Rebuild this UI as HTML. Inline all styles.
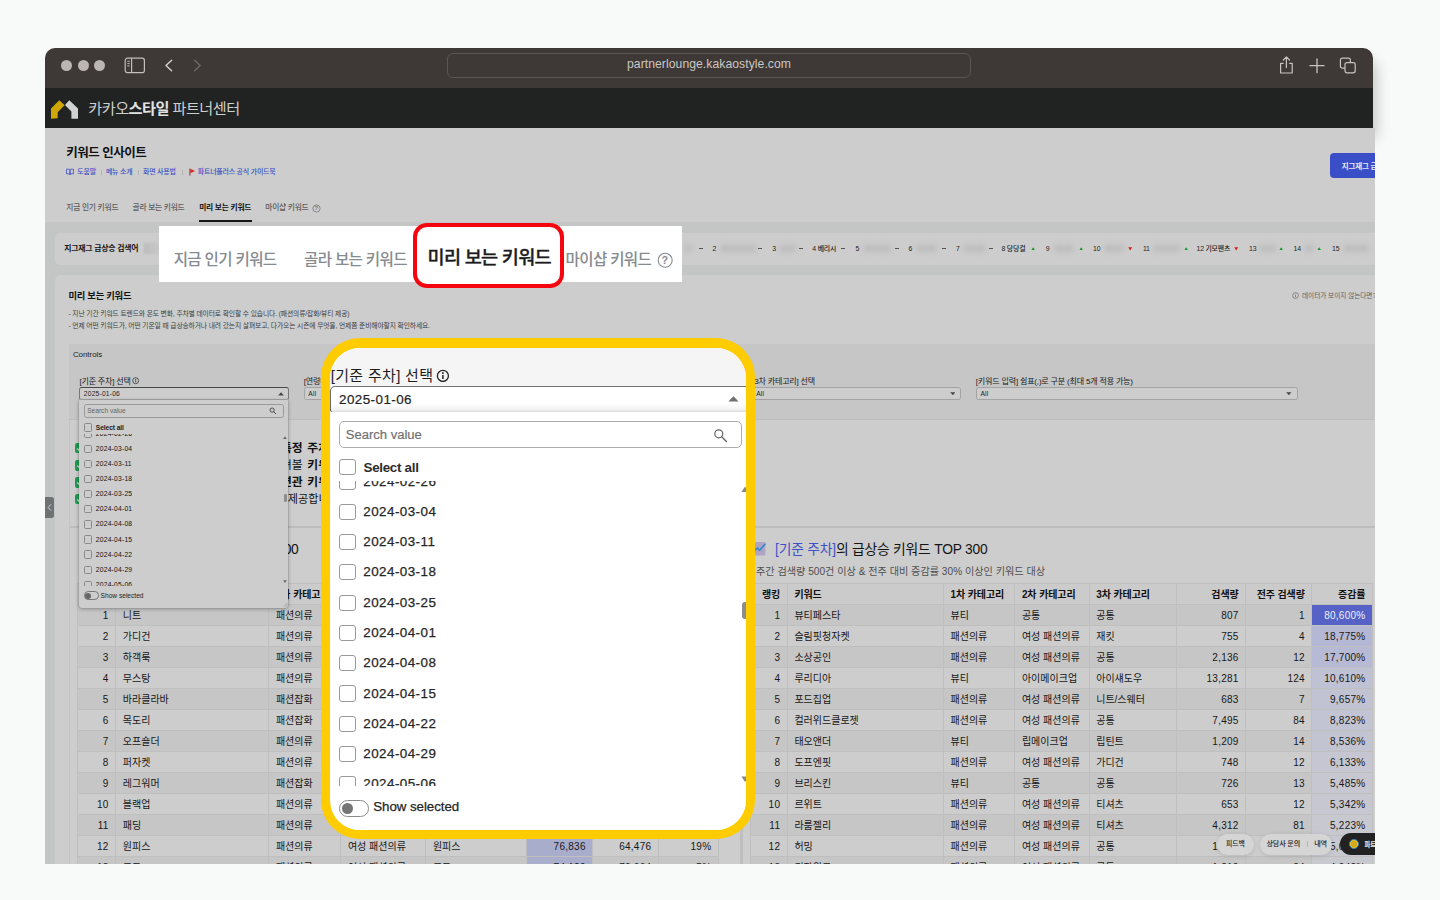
<!DOCTYPE html>
<html lang="ko"><head><meta charset="utf-8"><title>키워드 인사이트</title>
<style>
*{box-sizing:border-box;margin:0;padding:0}
html,body{width:1440px;height:900px;overflow:hidden;background:#f8f9f9;font-family:"Liberation Sans","Noto Sans CJK KR",sans-serif}
#root{position:absolute;left:0;top:0;width:1440px;height:900px;overflow:hidden}
#root div,#root span,#root svg{position:absolute}
#root span{white-space:nowrap;display:block}
#root span span{position:static;display:inline}
#win{left:44px;top:48px;width:1331px;height:816px;overflow:hidden}
#pg{left:-44px;top:-48px;width:1440px;height:900px}
.blur{filter:blur(2.5px);background:#bdbdbd;height:7px;border-radius:3px}
</style></head>
<body><div id="root">
<div style="left:52px;top:54px;width:1320px;height:78px;border-radius:10px 10px 0 0;box-shadow:5px 6px 14px rgba(0,0,0,.20)"></div>
<div id="win"><div id="pg">
<div style="left:44.5px;top:128px;width:1330.3px;height:740px;background:#c4c6c5;"></div>
<div style="left:44.5px;top:48px;width:1328.9px;height:40px;background:#3e3936;border-radius:10px 10px 0 0"></div>
<div style="left:44.5px;top:88px;width:1328.9px;height:40px;background:#212322;"></div>
<div style="left:61.3px;top:59.7px;width:11px;height:11px;background:#bcb5b2;border-radius:50%"></div>
<div style="left:77.7px;top:59.7px;width:11px;height:11px;background:#bcb5b2;border-radius:50%"></div>
<div style="left:94.0px;top:59.7px;width:11px;height:11px;background:#bcb5b2;border-radius:50%"></div>
<svg style="left:124px;top:57px" width="22" height="17" viewBox="0 0 22 17"><rect x="1.2" y="1.2" width="19.2" height="14.4" rx="2.2" fill="none" stroke="#c4bdb9" stroke-width="1.2"/><path d="M7.6 1.2V15.6" stroke="#c4bdb9" stroke-width="1.2"/><path d="M3.3 4.3h2.4M3.3 6.6h2.4M3.3 8.9h2.4" stroke="#c4bdb9" stroke-width="1"/></svg>
<svg style="left:163px;top:58px" width="12" height="15" viewBox="0 0 12 15"><path d="M8.6 2.2 3 7.5l5.6 5.3" fill="none" stroke="#d2ccc8" stroke-width="1.5" stroke-linecap="round" stroke-linejoin="round"/></svg>
<svg style="left:191px;top:58px" width="12" height="15" viewBox="0 0 12 15"><path d="M3.6 2.2 9.2 7.5l-5.6 5.3" fill="none" stroke="#6d6662" stroke-width="1.5" stroke-linecap="round" stroke-linejoin="round"/></svg>
<div style="left:447px;top:53px;width:524px;height:25px;background:#3e3936;border:1px solid #5b5551;border-radius:6px"></div>
<span style="left:709.0px;top:55.0px;font-size:12.2px;line-height:18px;color:#cbc6c3;font-weight:400;transform:translateX(-50%);letter-spacing:.05px">partnerlounge.kakaostyle.com</span>
<svg style="left:1278px;top:55px" width="17" height="20" viewBox="0 0 17 20"><path d="M5.6 8.3H2.6V18h11.6V8.3h-3" fill="none" stroke="#c9c3bf" stroke-width="1.2" stroke-linejoin="round"/><path d="M8.4 12.6V2.2M5.3 5 8.4 1.9 11.5 5" fill="none" stroke="#c9c3bf" stroke-width="1.2" stroke-linecap="round" stroke-linejoin="round"/></svg>
<svg style="left:1309px;top:58px" width="16" height="16" viewBox="0 0 16 16"><path d="M1 7.7h14M8 .9v13.8" stroke="#c9c3bf" stroke-width="1.3" stroke-linecap="round"/></svg>
<svg style="left:1339px;top:57px" width="18" height="17" viewBox="0 0 18 17"><rect x="1.4" y="1.2" width="10" height="10" rx="2" fill="none" stroke="#c9c3bf" stroke-width="1.2"/><rect x="6" y="5.6" width="10.2" height="10.2" rx="2" fill="#3e3936" stroke="#c9c3bf" stroke-width="1.2"/></svg>
<svg style="left:50px;top:99px" width="30" height="21" viewBox="0 0 30 21"><path d="M1 19.7V9.6L9.3 1.2 14.6 6.3 7.7 13.2V19.2Z" fill="#cfa602"/><path d="M19.3 1.2 28 9.6V19.7H21.4V12.6L15 6.1Z" fill="#d2d2d2"/></svg>
<span style="left:88.3px;top:97.9px;font-size:15.2px;line-height:22px;color:#cfcfcf;font-weight:400;letter-spacing:-.55px">카카오<span style="font-weight:700;color:#e2e2e2">스타일</span> 파트너센터</span>
<div style="left:44.5px;top:128px;width:1330.3px;height:94px;background:#cdcdcd;"></div>
<span style="left:66.3px;top:143.6px;font-size:12.5px;line-height:18px;color:#111;font-weight:700;letter-spacing:-.5px">키워드 인사이트</span>
<svg style="left:66px;top:168px" width="8" height="7.6" viewBox="0 0 80 76"><path d="M5 12H30Q40 12 40 22V66Q40 58 30 58H5ZM75 12H50Q40 12 40 22V66Q40 58 50 58H75Z" fill="none" stroke="#3b4fc4" stroke-width="8" stroke-linejoin="round"/></svg>
<span style="left:77.3px;top:166.8px;font-size:6.95px;line-height:10px;color:#3b4fc4;font-weight:500;letter-spacing:-.2px">도움말</span>
<div style="left:100.6px;top:169.5px;width:0.7px;height:5px;background:#b4b4b4;"></div>
<span style="left:105.9px;top:166.8px;font-size:6.95px;line-height:10px;color:#3b4fc4;font-weight:500;letter-spacing:-.2px">메뉴 소개</span>
<div style="left:138px;top:169.5px;width:0.7px;height:5px;background:#b4b4b4;"></div>
<span style="left:143.0px;top:166.8px;font-size:6.95px;line-height:10px;color:#3b4fc4;font-weight:500;letter-spacing:-.2px">화면 사용법</span>
<div style="left:181.8px;top:169.5px;width:0.7px;height:5px;background:#b4b4b4;"></div>
<svg style="left:189px;top:168px" width="7" height="8" viewBox="0 0 7 8"><path d="M.9.6v7" stroke="#7a2a22" stroke-width=".9"/><path d="M1.3.8 6 3 1.3 5.2Z" fill="#d62a22"/></svg>
<span style="left:197.8px;top:166.8px;font-size:6.95px;line-height:10px;color:#3b4fc4;font-weight:500;letter-spacing:-.2px">파트너플러스 공식 가이드북</span>
<span style="left:66.3px;top:202.3px;font-size:7.75px;line-height:11px;color:#5e5e5e;font-weight:500;letter-spacing:-.25px">지금 인기 키워드</span>
<span style="left:132.5px;top:202.3px;font-size:7.75px;line-height:11px;color:#5e5e5e;font-weight:500;letter-spacing:-.25px">골라 보는 키워드</span>
<span style="left:199.2px;top:202.3px;font-size:7.75px;line-height:11px;color:#111;font-weight:700;letter-spacing:-.25px">미리 보는 키워드</span>
<span style="left:265.3px;top:202.3px;font-size:7.75px;line-height:11px;color:#5e5e5e;font-weight:500;letter-spacing:-.25px">마이샵 키워드</span>
<svg style="left:311.8px;top:203.6px" width="9" height="9" viewBox="0 0 9 9"><circle cx="4.5" cy="4.5" r="3.6" fill="none" stroke="#6c6c6c" stroke-width=".7"/></svg>
<span style="left:316.3px;top:204.0px;font-size:5.2px;line-height:8px;color:#6c6c6c;font-weight:700;transform:translateX(-50%)">?</span>
<div style="left:199.2px;top:220.4px;width:53.2px;height:1.8px;background:#161616;"></div>
<div style="left:1330.4px;top:153px;width:60px;height:25px;background:#3a4ec7;border-radius:4px"></div>
<span style="left:1341.8px;top:161.0px;font-size:7.5px;line-height:11px;color:#e6e8f6;font-weight:700;letter-spacing:-.2px">지그재그 급상승</span>
<div style="left:55px;top:233px;width:1340px;height:31.5px;background:#cdcdcd;border-radius:5px"></div>
<span style="left:64.3px;top:242.9px;font-size:7.9px;line-height:12px;color:#141414;font-weight:700;letter-spacing:-.25px">지그재그 급상승 검색어</span>
<div style="left:144px;top:243px;width:16px;height:11px;background:linear-gradient(90deg,#bdbdbd,#c9c9c9);filter:blur(1.2px)"></div>
<div style="left:698.5px;top:248.3px;width:4px;height:0.9px;background:#555;"></div>
<div class="blur" style="left:684px;top:245px;width:8px"></div>
<span style="left:712.5px;top:243.8px;font-size:6.9px;line-height:10px;color:#1c1c1c;font-weight:500;letter-spacing:-.2px">2</span>
<div class="blur" style="left:720px;top:245.3px;width:36px"></div>
<div style="left:757.5px;top:248.3px;width:4px;height:0.9px;background:#555;"></div>
<span style="left:772.3px;top:243.8px;font-size:6.9px;line-height:10px;color:#1c1c1c;font-weight:500;letter-spacing:-.2px">3</span>
<div class="blur" style="left:779px;top:245.3px;width:17px"></div>
<div style="left:799px;top:248.3px;width:4px;height:0.9px;background:#555;"></div>
<span style="left:812.3px;top:243.8px;font-size:6.9px;line-height:10px;color:#1c1c1c;font-weight:500;letter-spacing:-.2px">4 베리시</span>
<div style="left:841px;top:248.3px;width:4px;height:0.9px;background:#555;"></div>
<span style="left:855.5px;top:243.8px;font-size:6.9px;line-height:10px;color:#1c1c1c;font-weight:500;letter-spacing:-.2px">5</span>
<div class="blur" style="left:863px;top:245.3px;width:28px"></div>
<div style="left:894.5px;top:248.3px;width:4px;height:0.9px;background:#555;"></div>
<span style="left:908.5px;top:243.8px;font-size:6.9px;line-height:10px;color:#1c1c1c;font-weight:500;letter-spacing:-.2px">6</span>
<div class="blur" style="left:916px;top:245.3px;width:21px"></div>
<div style="left:942px;top:248.3px;width:4px;height:0.9px;background:#555;"></div>
<span style="left:956.0px;top:243.8px;font-size:6.9px;line-height:10px;color:#1c1c1c;font-weight:500;letter-spacing:-.2px">7</span>
<div class="blur" style="left:963px;top:245.3px;width:23px"></div>
<div style="left:989px;top:248.3px;width:4px;height:0.9px;background:#555;"></div>
<span style="left:1001.5px;top:243.8px;font-size:6.9px;line-height:10px;color:#1c1c1c;font-weight:500;letter-spacing:-.2px">8 당당걸</span>
<svg style="left:1030.8px;top:246.6px" width="4.4" height="3.6" viewBox="0 0 44 36"><path d="M22 2 42 34H2Z" fill="#149a2a"/></svg>
<span style="left:1045.8px;top:243.8px;font-size:6.9px;line-height:10px;color:#1c1c1c;font-weight:500;letter-spacing:-.2px">9</span>
<div class="blur" style="left:1054px;top:245.3px;width:20px"></div>
<svg style="left:1078.8px;top:246.6px" width="4.4" height="3.6" viewBox="0 0 44 36"><path d="M22 2 42 34H2Z" fill="#149a2a"/></svg>
<span style="left:1093.0px;top:243.8px;font-size:6.9px;line-height:10px;color:#1c1c1c;font-weight:500;letter-spacing:-.2px">10</span>
<div class="blur" style="left:1104px;top:245.3px;width:20px"></div>
<svg style="left:1127.8px;top:247px" width="4.4" height="3.6" viewBox="0 0 44 36"><path d="M22 34 42 2H2Z" fill="#d81e1e"/></svg>
<span style="left:1143.0px;top:243.8px;font-size:6.9px;line-height:10px;color:#1c1c1c;font-weight:500;letter-spacing:-.2px">11</span>
<div class="blur" style="left:1153px;top:245.3px;width:27px"></div>
<svg style="left:1183.8px;top:246.6px" width="4.4" height="3.6" viewBox="0 0 44 36"><path d="M22 2 42 34H2Z" fill="#149a2a"/></svg>
<span style="left:1196.5px;top:243.8px;font-size:6.9px;line-height:10px;color:#1c1c1c;font-weight:500;letter-spacing:-.2px">12 기모팬츠</span>
<svg style="left:1234.2px;top:247px" width="4.4" height="3.6" viewBox="0 0 44 36"><path d="M22 34 42 2H2Z" fill="#d81e1e"/></svg>
<span style="left:1249.1px;top:243.8px;font-size:6.9px;line-height:10px;color:#1c1c1c;font-weight:500;letter-spacing:-.2px">13</span>
<div class="blur" style="left:1259px;top:245.3px;width:17px"></div>
<svg style="left:1278.8px;top:246.6px" width="4.4" height="3.6" viewBox="0 0 44 36"><path d="M22 2 42 34H2Z" fill="#149a2a"/></svg>
<span style="left:1293.5px;top:243.8px;font-size:6.9px;line-height:10px;color:#1c1c1c;font-weight:500;letter-spacing:-.2px">14</span>
<div class="blur" style="left:1304px;top:245.3px;width:10px"></div>
<svg style="left:1317.3px;top:246.6px" width="4.4" height="3.6" viewBox="0 0 44 36"><path d="M22 2 42 34H2Z" fill="#149a2a"/></svg>
<span style="left:1332.0px;top:243.8px;font-size:6.9px;line-height:10px;color:#1c1c1c;font-weight:500;letter-spacing:-.2px">15</span>
<div class="blur" style="left:1343px;top:245.3px;width:26px"></div>
<svg style="left:1374.8px;top:247px" width="4.4" height="3.6" viewBox="0 0 44 36"><path d="M22 34 42 2H2Z" fill="#d81e1e"/></svg>
<div style="left:55px;top:275px;width:1340px;height:620px;background:#cdcdcd;border-radius:6px"></div>
<span style="left:68.4px;top:289.1px;font-size:9.3px;line-height:14px;color:#111;font-weight:700;letter-spacing:-.25px">미리 보는 키워드</span>
<span style="left:68.4px;top:308.9px;font-size:6.76px;line-height:10px;color:#3c3c3c;font-weight:400;letter-spacing:-.1px">- 지난 기간 키워드 트렌드와 온도 변화, 주차별 데이터로 확인할 수 있습니다. (패션의류/잡화/뷰티 제공)</span>
<span style="left:68.4px;top:320.9px;font-size:6.76px;line-height:10px;color:#3c3c3c;font-weight:400;letter-spacing:-.1px">- 언제 어떤 키워드가, 어떤 기온일 때 급상승하거나 내려 갔는지 살펴보고, 다가오는 시즌에 무엇을, 언제쯤 준비해야할지 확인하세요.</span>
<svg style="left:1292.4px;top:292px" width="7" height="7" viewBox="0 0 7 7"><circle cx="3.5" cy="3.5" r="2.9" fill="none" stroke="#5e5e5e" stroke-width=".6"/><path d="M3.5 3.1v2M3.5 1.8v.6" stroke="#5e5e5e" stroke-width=".7"/></svg>
<span style="left:1302.0px;top:290.6px;font-size:6.6px;line-height:10px;color:#5e5e5e;font-weight:400;letter-spacing:0">데이터가 보이지 않는다면?</span>
<div style="left:69px;top:344.4px;width:1330px;height:75px;background:#c6c6c6;"></div>
<div style="left:69px;top:418.6px;width:1330px;height:1.6px;background:#bebebe;"></div>
<span style="left:72.9px;top:348.9px;font-size:7.9px;line-height:12px;color:#1c1c1c;font-weight:400;">Controls</span>
<span style="left:79.4px;top:375.5px;font-size:8.05px;line-height:12px;color:#1a1a1a;font-weight:400;letter-spacing:-.2px">[기준 주차] 선택</span>
<svg style="left:131.6px;top:377.4px" width="7.4" height="7.4" viewBox="0 0 74 74"><circle cx="37" cy="37" r="30" fill="none" stroke="#222" stroke-width="7"/><path d="M37 33v20" stroke="#222" stroke-width="8"/><circle cx="37" cy="22" r="5" fill="#222"/></svg>
<span style="left:303.7px;top:375.5px;font-size:8.05px;line-height:12px;color:#1a1a1a;font-weight:400;letter-spacing:-.2px">[연령대] 선택</span>
<span style="left:752.2px;top:375.5px;font-size:8.05px;line-height:12px;color:#1a1a1a;font-weight:400;letter-spacing:-.2px">[3차 카테고리] 선택</span>
<span style="left:975.8px;top:375.5px;font-size:8.05px;line-height:12px;color:#1a1a1a;font-weight:400;letter-spacing:-.2px">[키워드 입력] 쉼표(,)로 구분 (최대 5개 적용 가능)</span>
<div style="left:79.2px;top:386.8px;width:209.4px;height:13.4px;background:#cdcdcd;border:1px solid #4a4a4a;border-radius:2.5px;border-bottom-color:#b0b0b0;border-left-color:#777;border-right-color:#777"></div>
<span style="left:83.8px;top:388.6px;font-size:6.7px;line-height:10px;color:#1c1c1c;font-weight:400;letter-spacing:.2px">2025-01-06</span>
<svg style="left:278.0px;top:392px" width="6" height="3.6" viewBox="0 0 60 36"><path d="M30 2 58 34H2Z" fill="#444"/></svg>
<div style="left:303.7px;top:386.8px;width:120px;height:13.4px;background:#cdcdcd;border:1px solid #a3a3a3;border-radius:2.5px"></div>
<span style="left:308.3px;top:388.6px;font-size:6.7px;line-height:10px;color:#1c1c1c;font-weight:400;letter-spacing:.2px">All</span>
<svg style="left:412.09999999999997px;top:392px" width="5.6" height="3.4" viewBox="0 0 60 36"><path d="M30 34 58 2H2Z" fill="#444"/></svg>
<div style="left:751.6px;top:386.8px;width:209.8px;height:13.4px;background:#cdcdcd;border:1px solid #a3a3a3;border-radius:2.5px"></div>
<span style="left:756.2px;top:388.6px;font-size:6.7px;line-height:10px;color:#1c1c1c;font-weight:400;letter-spacing:.2px">All</span>
<svg style="left:949.8000000000001px;top:392px" width="5.6" height="3.4" viewBox="0 0 60 36"><path d="M30 34 58 2H2Z" fill="#444"/></svg>
<div style="left:975.8px;top:386.8px;width:321.8px;height:13.4px;background:#cdcdcd;border:1px solid #a3a3a3;border-radius:2.5px"></div>
<span style="left:980.4px;top:388.6px;font-size:6.7px;line-height:10px;color:#1c1c1c;font-weight:400;letter-spacing:.2px">All</span>
<svg style="left:1286.0px;top:392px" width="5.6" height="3.4" viewBox="0 0 60 36"><path d="M30 34 58 2H2Z" fill="#444"/></svg>
<div style="left:70px;top:420px;width:671px;height:106px;background:#cdcdcd;"></div>
<div style="left:75.4px;top:442.6px;width:10.6px;height:10.6px;background:#1f9d4f;border-radius:2px"></div>
<svg style="left:75.4px;top:442.6px" width="10.6" height="10.6" viewBox="0 0 106 106"><path d="M22 56 44 78 84 28" fill="none" stroke="#d8d8d8" stroke-width="14"/></svg>
<span style="left:280.9px;top:440.5px;font-size:11.8px;line-height:15px;color:#111;font-weight:400;letter-spacing:0;word-spacing:1.4px"><b>특정 주차</b>의 급상승 키워드</span>
<div style="left:75.4px;top:460.20000000000005px;width:10.6px;height:10.6px;background:#1f9d4f;border-radius:2px"></div>
<svg style="left:75.4px;top:460.20000000000005px" width="10.6" height="10.6" viewBox="0 0 106 106"><path d="M22 56 44 78 84 28" fill="none" stroke="#d8d8d8" stroke-width="14"/></svg>
<span style="left:280.9px;top:458.1px;font-size:11.8px;line-height:15px;color:#111;font-weight:400;letter-spacing:0;word-spacing:1.4px">펴볼 <b>키워드</b>를 입력</span>
<div style="left:75.4px;top:477.3px;width:10.6px;height:10.6px;background:#1f9d4f;border-radius:2px"></div>
<svg style="left:75.4px;top:477.3px" width="10.6" height="10.6" viewBox="0 0 106 106"><path d="M22 56 44 78 84 28" fill="none" stroke="#d8d8d8" stroke-width="14"/></svg>
<span style="left:280.9px;top:475.2px;font-size:11.8px;line-height:15px;color:#111;font-weight:400;letter-spacing:0;word-spacing:1.4px"><b>연관 키워드</b>의 추이</span>
<div style="left:75.4px;top:493.90000000000003px;width:10.6px;height:10.6px;background:#1f9d4f;border-radius:2px"></div>
<svg style="left:75.4px;top:493.90000000000003px" width="10.6" height="10.6" viewBox="0 0 106 106"><path d="M22 56 44 78 84 28" fill="none" stroke="#d8d8d8" stroke-width="14"/></svg>
<span style="left:287.8px;top:491.8px;font-size:11.1px;line-height:15px;color:#111;font-weight:400;letter-spacing:0;word-spacing:1.4px">제공합니다.</span>
<div style="left:70px;top:526.2px;width:1330px;height:2px;background:#bdbdbd;"></div>
<div style="left:740.2px;top:528px;width:2.6px;height:340px;background:#bfbfbf;"></div>
<div style="left:69.4px;top:420px;width:0.9px;height:450px;background:#c3c3c3;"></div>
<div style="left:77.3px;top:583.0px;width:641.0px;height:21.03px;background:#cbcbcb;"></div>
<div style="left:77.3px;top:583.0px;width:641.0px;height:0.9px;background:#bfbfbf;"></div>
<span style="right:1331.4px;top:587.9px;font-size:10.0px;line-height:14px;color:#111;font-weight:700;letter-spacing:-.1px">순위</span>
<span style="left:122.8px;top:587.9px;font-size:10.0px;line-height:14px;color:#111;font-weight:700;letter-spacing:-.1px">키워드</span>
<span style="left:275.9px;top:587.9px;font-size:10.0px;line-height:14px;color:#111;font-weight:700;letter-spacing:-.1px">1차 카테고리</span>
<span style="left:347.9px;top:587.9px;font-size:10.0px;line-height:14px;color:#111;font-weight:700;letter-spacing:-.1px">2차 카테고리</span>
<span style="left:432.9px;top:587.9px;font-size:10.0px;line-height:14px;color:#111;font-weight:700;letter-spacing:-.1px">3차 카테고리</span>
<span style="right:854.3px;top:587.9px;font-size:10.0px;line-height:14px;color:#111;font-weight:700;letter-spacing:-.1px">검색량</span>
<span style="right:788.7px;top:587.9px;font-size:10.0px;line-height:14px;color:#111;font-weight:700;letter-spacing:-.1px">전주 검색량</span>
<span style="right:728.7px;top:587.9px;font-size:10.0px;line-height:14px;color:#111;font-weight:700;letter-spacing:-.1px">증감률</span>
<div style="left:77.3px;top:604.0px;width:641.0px;height:21.03px;background:#c6c6c6;"></div>
<div style="left:526px;top:604.0px;width:66.70000000000005px;height:21.03px;background:#8f95c8;"></div>
<div style="left:77.3px;top:604.0px;width:641.0px;height:0.9px;background:#bfbfbf;"></div>
<span style="right:1331.4px;top:608.6px;font-size:10.0px;line-height:14px;color:#171717;font-weight:400;letter-spacing:.25px">1</span>
<span style="left:122.8px;top:608.6px;font-size:10.0px;line-height:14px;color:#171717;font-weight:400;letter-spacing:0">니트</span>
<span style="left:275.9px;top:608.6px;font-size:10.0px;line-height:14px;color:#171717;font-weight:400;letter-spacing:0">패션의류</span>
<span style="left:347.9px;top:608.6px;font-size:10.0px;line-height:14px;color:#171717;font-weight:400;letter-spacing:0">여성 패션의류</span>
<span style="left:432.9px;top:608.6px;font-size:10.0px;line-height:14px;color:#171717;font-weight:400;letter-spacing:0">니트/스웨터</span>
<span style="right:854.3px;top:608.6px;font-size:10.0px;line-height:14px;color:#171717;font-weight:400;letter-spacing:.25px">182,340</span>
<span style="right:788.7px;top:608.6px;font-size:10.0px;line-height:14px;color:#171717;font-weight:400;letter-spacing:.25px">171,220</span>
<span style="right:728.7px;top:608.6px;font-size:10.0px;line-height:14px;color:#171717;font-weight:400;letter-spacing:.25px">6%</span>
<div style="left:77.3px;top:625.03px;width:641.0px;height:21.03px;background:#cdcdcd;"></div>
<div style="left:526px;top:625.03px;width:66.70000000000005px;height:21.03px;background:#969bca;"></div>
<div style="left:77.3px;top:625.03px;width:641.0px;height:0.9px;background:#bfbfbf;"></div>
<span style="right:1331.4px;top:629.6px;font-size:10.0px;line-height:14px;color:#171717;font-weight:400;letter-spacing:.25px">2</span>
<span style="left:122.8px;top:629.6px;font-size:10.0px;line-height:14px;color:#171717;font-weight:400;letter-spacing:0">가디건</span>
<span style="left:275.9px;top:629.6px;font-size:10.0px;line-height:14px;color:#171717;font-weight:400;letter-spacing:0">패션의류</span>
<span style="left:347.9px;top:629.6px;font-size:10.0px;line-height:14px;color:#171717;font-weight:400;letter-spacing:0">여성 패션의류</span>
<span style="left:432.9px;top:629.6px;font-size:10.0px;line-height:14px;color:#171717;font-weight:400;letter-spacing:0">가디건</span>
<span style="right:854.3px;top:629.6px;font-size:10.0px;line-height:14px;color:#171717;font-weight:400;letter-spacing:.25px">154,872</span>
<span style="right:788.7px;top:629.6px;font-size:10.0px;line-height:14px;color:#171717;font-weight:400;letter-spacing:.25px">149,310</span>
<span style="right:728.7px;top:629.6px;font-size:10.0px;line-height:14px;color:#171717;font-weight:400;letter-spacing:.25px">4%</span>
<div style="left:77.3px;top:646.06px;width:641.0px;height:21.03px;background:#c6c6c6;"></div>
<div style="left:526px;top:646.06px;width:66.70000000000005px;height:21.03px;background:#9ca1cb;"></div>
<div style="left:77.3px;top:646.06px;width:641.0px;height:0.9px;background:#bfbfbf;"></div>
<span style="right:1331.4px;top:650.7px;font-size:10.0px;line-height:14px;color:#171717;font-weight:400;letter-spacing:.25px">3</span>
<span style="left:122.8px;top:650.7px;font-size:10.0px;line-height:14px;color:#171717;font-weight:400;letter-spacing:0">하객룩</span>
<span style="left:275.9px;top:650.7px;font-size:10.0px;line-height:14px;color:#171717;font-weight:400;letter-spacing:0">패션의류</span>
<span style="left:347.9px;top:650.7px;font-size:10.0px;line-height:14px;color:#171717;font-weight:400;letter-spacing:0">여성 패션의류</span>
<span style="left:432.9px;top:650.7px;font-size:10.0px;line-height:14px;color:#171717;font-weight:400;letter-spacing:0">공통</span>
<span style="right:854.3px;top:650.7px;font-size:10.0px;line-height:14px;color:#171717;font-weight:400;letter-spacing:.25px">132,561</span>
<span style="right:788.7px;top:650.7px;font-size:10.0px;line-height:14px;color:#171717;font-weight:400;letter-spacing:.25px">120,447</span>
<span style="right:728.7px;top:650.7px;font-size:10.0px;line-height:14px;color:#171717;font-weight:400;letter-spacing:.25px">10%</span>
<div style="left:77.3px;top:667.09px;width:641.0px;height:21.03px;background:#cdcdcd;"></div>
<div style="left:526px;top:667.09px;width:66.70000000000005px;height:21.03px;background:#a0a4cc;"></div>
<div style="left:77.3px;top:667.09px;width:641.0px;height:0.9px;background:#bfbfbf;"></div>
<span style="right:1331.4px;top:671.7px;font-size:10.0px;line-height:14px;color:#171717;font-weight:400;letter-spacing:.25px">4</span>
<span style="left:122.8px;top:671.7px;font-size:10.0px;line-height:14px;color:#171717;font-weight:400;letter-spacing:0">무스탕</span>
<span style="left:275.9px;top:671.7px;font-size:10.0px;line-height:14px;color:#171717;font-weight:400;letter-spacing:0">패션의류</span>
<span style="left:347.9px;top:671.7px;font-size:10.0px;line-height:14px;color:#171717;font-weight:400;letter-spacing:0">여성 패션의류</span>
<span style="left:432.9px;top:671.7px;font-size:10.0px;line-height:14px;color:#171717;font-weight:400;letter-spacing:0">무스탕</span>
<span style="right:854.3px;top:671.7px;font-size:10.0px;line-height:14px;color:#171717;font-weight:400;letter-spacing:.25px">121,094</span>
<span style="right:788.7px;top:671.7px;font-size:10.0px;line-height:14px;color:#171717;font-weight:400;letter-spacing:.25px">118,236</span>
<span style="right:728.7px;top:671.7px;font-size:10.0px;line-height:14px;color:#171717;font-weight:400;letter-spacing:.25px">2%</span>
<div style="left:77.3px;top:688.12px;width:641.0px;height:21.03px;background:#c6c6c6;"></div>
<div style="left:526px;top:688.12px;width:66.70000000000005px;height:21.03px;background:#a3a7cc;"></div>
<div style="left:77.3px;top:688.12px;width:641.0px;height:0.9px;background:#bfbfbf;"></div>
<span style="right:1331.4px;top:692.7px;font-size:10.0px;line-height:14px;color:#171717;font-weight:400;letter-spacing:.25px">5</span>
<span style="left:122.8px;top:692.7px;font-size:10.0px;line-height:14px;color:#171717;font-weight:400;letter-spacing:0">바라클라바</span>
<span style="left:275.9px;top:692.7px;font-size:10.0px;line-height:14px;color:#171717;font-weight:400;letter-spacing:0">패션잡화</span>
<span style="left:347.9px;top:692.7px;font-size:10.0px;line-height:14px;color:#171717;font-weight:400;letter-spacing:0">모자</span>
<span style="left:432.9px;top:692.7px;font-size:10.0px;line-height:14px;color:#171717;font-weight:400;letter-spacing:0">바라클라바</span>
<span style="right:854.3px;top:692.7px;font-size:10.0px;line-height:14px;color:#171717;font-weight:400;letter-spacing:.25px">110,482</span>
<span style="right:788.7px;top:692.7px;font-size:10.0px;line-height:14px;color:#171717;font-weight:400;letter-spacing:.25px">98,377</span>
<span style="right:728.7px;top:692.7px;font-size:10.0px;line-height:14px;color:#171717;font-weight:400;letter-spacing:.25px">12%</span>
<div style="left:77.3px;top:709.15px;width:641.0px;height:21.03px;background:#cdcdcd;"></div>
<div style="left:526px;top:709.15px;width:66.70000000000005px;height:21.03px;background:#a5a9cc;"></div>
<div style="left:77.3px;top:709.15px;width:641.0px;height:0.9px;background:#bfbfbf;"></div>
<span style="right:1331.4px;top:713.8px;font-size:10.0px;line-height:14px;color:#171717;font-weight:400;letter-spacing:.25px">6</span>
<span style="left:122.8px;top:713.8px;font-size:10.0px;line-height:14px;color:#171717;font-weight:400;letter-spacing:0">목도리</span>
<span style="left:275.9px;top:713.8px;font-size:10.0px;line-height:14px;color:#171717;font-weight:400;letter-spacing:0">패션잡화</span>
<span style="left:347.9px;top:713.8px;font-size:10.0px;line-height:14px;color:#171717;font-weight:400;letter-spacing:0">머플러/스카프</span>
<span style="left:432.9px;top:713.8px;font-size:10.0px;line-height:14px;color:#171717;font-weight:400;letter-spacing:0">머플러</span>
<span style="right:854.3px;top:713.8px;font-size:10.0px;line-height:14px;color:#171717;font-weight:400;letter-spacing:.25px">104,925</span>
<span style="right:788.7px;top:713.8px;font-size:10.0px;line-height:14px;color:#171717;font-weight:400;letter-spacing:.25px">97,118</span>
<span style="right:728.7px;top:713.8px;font-size:10.0px;line-height:14px;color:#171717;font-weight:400;letter-spacing:.25px">8%</span>
<div style="left:77.3px;top:730.1800000000001px;width:641.0px;height:21.03px;background:#c6c6c6;"></div>
<div style="left:526px;top:730.1800000000001px;width:66.70000000000005px;height:21.03px;background:#a6aacc;"></div>
<div style="left:77.3px;top:730.1800000000001px;width:641.0px;height:0.9px;background:#bfbfbf;"></div>
<span style="right:1331.4px;top:734.8px;font-size:10.0px;line-height:14px;color:#171717;font-weight:400;letter-spacing:.25px">7</span>
<span style="left:122.8px;top:734.8px;font-size:10.0px;line-height:14px;color:#171717;font-weight:400;letter-spacing:0">오프숄더</span>
<span style="left:275.9px;top:734.8px;font-size:10.0px;line-height:14px;color:#171717;font-weight:400;letter-spacing:0">패션의류</span>
<span style="left:347.9px;top:734.8px;font-size:10.0px;line-height:14px;color:#171717;font-weight:400;letter-spacing:0">여성 패션의류</span>
<span style="left:432.9px;top:734.8px;font-size:10.0px;line-height:14px;color:#171717;font-weight:400;letter-spacing:0">티셔츠</span>
<span style="right:854.3px;top:734.8px;font-size:10.0px;line-height:14px;color:#171717;font-weight:400;letter-spacing:.25px">98,113</span>
<span style="right:788.7px;top:734.8px;font-size:10.0px;line-height:14px;color:#171717;font-weight:400;letter-spacing:.25px">91,540</span>
<span style="right:728.7px;top:734.8px;font-size:10.0px;line-height:14px;color:#171717;font-weight:400;letter-spacing:.25px">7%</span>
<div style="left:77.3px;top:751.21px;width:641.0px;height:21.03px;background:#cdcdcd;"></div>
<div style="left:526px;top:751.21px;width:66.70000000000005px;height:21.03px;background:#a7abcc;"></div>
<div style="left:77.3px;top:751.21px;width:641.0px;height:0.9px;background:#bfbfbf;"></div>
<span style="right:1331.4px;top:755.8px;font-size:10.0px;line-height:14px;color:#171717;font-weight:400;letter-spacing:.25px">8</span>
<span style="left:122.8px;top:755.8px;font-size:10.0px;line-height:14px;color:#171717;font-weight:400;letter-spacing:0">퍼자켓</span>
<span style="left:275.9px;top:755.8px;font-size:10.0px;line-height:14px;color:#171717;font-weight:400;letter-spacing:0">패션의류</span>
<span style="left:347.9px;top:755.8px;font-size:10.0px;line-height:14px;color:#171717;font-weight:400;letter-spacing:0">여성 패션의류</span>
<span style="left:432.9px;top:755.8px;font-size:10.0px;line-height:14px;color:#171717;font-weight:400;letter-spacing:0">재킷</span>
<span style="right:854.3px;top:755.8px;font-size:10.0px;line-height:14px;color:#171717;font-weight:400;letter-spacing:.25px">93,207</span>
<span style="right:788.7px;top:755.8px;font-size:10.0px;line-height:14px;color:#171717;font-weight:400;letter-spacing:.25px">88,652</span>
<span style="right:728.7px;top:755.8px;font-size:10.0px;line-height:14px;color:#171717;font-weight:400;letter-spacing:.25px">5%</span>
<div style="left:77.3px;top:772.24px;width:641.0px;height:21.03px;background:#c6c6c6;"></div>
<div style="left:526px;top:772.24px;width:66.70000000000005px;height:21.03px;background:#a8accc;"></div>
<div style="left:77.3px;top:772.24px;width:641.0px;height:0.9px;background:#bfbfbf;"></div>
<span style="right:1331.4px;top:776.9px;font-size:10.0px;line-height:14px;color:#171717;font-weight:400;letter-spacing:.25px">9</span>
<span style="left:122.8px;top:776.9px;font-size:10.0px;line-height:14px;color:#171717;font-weight:400;letter-spacing:0">레그워머</span>
<span style="left:275.9px;top:776.9px;font-size:10.0px;line-height:14px;color:#171717;font-weight:400;letter-spacing:0">패션잡화</span>
<span style="left:347.9px;top:776.9px;font-size:10.0px;line-height:14px;color:#171717;font-weight:400;letter-spacing:0">양말/스타킹</span>
<span style="left:432.9px;top:776.9px;font-size:10.0px;line-height:14px;color:#171717;font-weight:400;letter-spacing:0">레그워머</span>
<span style="right:854.3px;top:776.9px;font-size:10.0px;line-height:14px;color:#171717;font-weight:400;letter-spacing:.25px">88,730</span>
<span style="right:788.7px;top:776.9px;font-size:10.0px;line-height:14px;color:#171717;font-weight:400;letter-spacing:.25px">80,114</span>
<span style="right:728.7px;top:776.9px;font-size:10.0px;line-height:14px;color:#171717;font-weight:400;letter-spacing:.25px">11%</span>
<div style="left:77.3px;top:793.27px;width:641.0px;height:21.03px;background:#cdcdcd;"></div>
<div style="left:526px;top:793.27px;width:66.70000000000005px;height:21.03px;background:#a8accc;"></div>
<div style="left:77.3px;top:793.27px;width:641.0px;height:0.9px;background:#bfbfbf;"></div>
<span style="right:1331.4px;top:797.9px;font-size:10.0px;line-height:14px;color:#171717;font-weight:400;letter-spacing:.25px">10</span>
<span style="left:122.8px;top:797.9px;font-size:10.0px;line-height:14px;color:#171717;font-weight:400;letter-spacing:0">블랙업</span>
<span style="left:275.9px;top:797.9px;font-size:10.0px;line-height:14px;color:#171717;font-weight:400;letter-spacing:0">패션의류</span>
<span style="left:347.9px;top:797.9px;font-size:10.0px;line-height:14px;color:#171717;font-weight:400;letter-spacing:0">여성 패션의류</span>
<span style="left:432.9px;top:797.9px;font-size:10.0px;line-height:14px;color:#171717;font-weight:400;letter-spacing:0">공통</span>
<span style="right:854.3px;top:797.9px;font-size:10.0px;line-height:14px;color:#171717;font-weight:400;letter-spacing:.25px">84,006</span>
<span style="right:788.7px;top:797.9px;font-size:10.0px;line-height:14px;color:#171717;font-weight:400;letter-spacing:.25px">79,925</span>
<span style="right:728.7px;top:797.9px;font-size:10.0px;line-height:14px;color:#171717;font-weight:400;letter-spacing:.25px">5%</span>
<div style="left:77.3px;top:814.3px;width:641.0px;height:21.03px;background:#c6c6c6;"></div>
<div style="left:526px;top:814.3px;width:66.70000000000005px;height:21.03px;background:#a9adcc;"></div>
<div style="left:77.3px;top:814.3px;width:641.0px;height:0.9px;background:#bfbfbf;"></div>
<span style="right:1331.4px;top:818.9px;font-size:10.0px;line-height:14px;color:#171717;font-weight:400;letter-spacing:.25px">11</span>
<span style="left:122.8px;top:818.9px;font-size:10.0px;line-height:14px;color:#171717;font-weight:400;letter-spacing:0">패딩</span>
<span style="left:275.9px;top:818.9px;font-size:10.0px;line-height:14px;color:#171717;font-weight:400;letter-spacing:0">패션의류</span>
<span style="left:347.9px;top:818.9px;font-size:10.0px;line-height:14px;color:#171717;font-weight:400;letter-spacing:0">여성 패션의류</span>
<span style="left:432.9px;top:818.9px;font-size:10.0px;line-height:14px;color:#171717;font-weight:400;letter-spacing:0">패딩</span>
<span style="right:854.3px;top:818.9px;font-size:10.0px;line-height:14px;color:#171717;font-weight:400;letter-spacing:.25px">80,492</span>
<span style="right:788.7px;top:818.9px;font-size:10.0px;line-height:14px;color:#171717;font-weight:400;letter-spacing:.25px">86,310</span>
<span style="right:728.7px;top:818.9px;font-size:10.0px;line-height:14px;color:#171717;font-weight:400;letter-spacing:.25px">-7%</span>
<div style="left:77.3px;top:835.33px;width:641.0px;height:21.03px;background:#cdcdcd;"></div>
<div style="left:526px;top:835.33px;width:66.70000000000005px;height:21.03px;background:#a9adcc;"></div>
<div style="left:77.3px;top:835.33px;width:641.0px;height:0.9px;background:#bfbfbf;"></div>
<span style="right:1331.4px;top:839.9px;font-size:10.0px;line-height:14px;color:#171717;font-weight:400;letter-spacing:.25px">12</span>
<span style="left:122.8px;top:839.9px;font-size:10.0px;line-height:14px;color:#171717;font-weight:400;letter-spacing:0">원피스</span>
<span style="left:275.9px;top:839.9px;font-size:10.0px;line-height:14px;color:#171717;font-weight:400;letter-spacing:0">패션의류</span>
<span style="left:347.9px;top:839.9px;font-size:10.0px;line-height:14px;color:#171717;font-weight:400;letter-spacing:0">여성 패션의류</span>
<span style="left:432.9px;top:839.9px;font-size:10.0px;line-height:14px;color:#171717;font-weight:400;letter-spacing:0">원피스</span>
<span style="right:854.3px;top:839.9px;font-size:10.0px;line-height:14px;color:#171717;font-weight:400;letter-spacing:.25px">76,836</span>
<span style="right:788.7px;top:839.9px;font-size:10.0px;line-height:14px;color:#171717;font-weight:400;letter-spacing:.25px">64,476</span>
<span style="right:728.7px;top:839.9px;font-size:10.0px;line-height:14px;color:#171717;font-weight:400;letter-spacing:.25px">19%</span>
<div style="left:77.3px;top:856.36px;width:641.0px;height:21.03px;background:#c6c6c6;"></div>
<div style="left:526px;top:856.36px;width:66.70000000000005px;height:21.03px;background:#aaaecc;"></div>
<div style="left:77.3px;top:856.36px;width:641.0px;height:0.9px;background:#bfbfbf;"></div>
<span style="right:1331.4px;top:861.0px;font-size:10.0px;line-height:14px;color:#171717;font-weight:400;letter-spacing:.25px">13</span>
<span style="left:122.8px;top:861.0px;font-size:10.0px;line-height:14px;color:#171717;font-weight:400;letter-spacing:0">코트</span>
<span style="left:275.9px;top:861.0px;font-size:10.0px;line-height:14px;color:#171717;font-weight:400;letter-spacing:0">패션의류</span>
<span style="left:347.9px;top:861.0px;font-size:10.0px;line-height:14px;color:#171717;font-weight:400;letter-spacing:0">여성 패션의류</span>
<span style="left:432.9px;top:861.0px;font-size:10.0px;line-height:14px;color:#171717;font-weight:400;letter-spacing:0">코트</span>
<span style="right:854.3px;top:861.0px;font-size:10.0px;line-height:14px;color:#171717;font-weight:400;letter-spacing:.25px">74,120</span>
<span style="right:788.7px;top:861.0px;font-size:10.0px;line-height:14px;color:#171717;font-weight:400;letter-spacing:.25px">70,664</span>
<span style="right:728.7px;top:861.0px;font-size:10.0px;line-height:14px;color:#171717;font-weight:400;letter-spacing:.25px">5%</span>
<div style="left:76.89999999999999px;top:583.0px;width:0.9px;height:294.39px;background:#bfbfbf;"></div>
<div style="left:115.19999999999999px;top:583.0px;width:0.9px;height:294.39px;background:#bfbfbf;"></div>
<div style="left:268.3px;top:583.0px;width:0.9px;height:294.39px;background:#bfbfbf;"></div>
<div style="left:340.3px;top:583.0px;width:0.9px;height:294.39px;background:#bfbfbf;"></div>
<div style="left:425.3px;top:583.0px;width:0.9px;height:294.39px;background:#bfbfbf;"></div>
<div style="left:525.6px;top:583.0px;width:0.9px;height:294.39px;background:#bfbfbf;"></div>
<div style="left:592.3000000000001px;top:583.0px;width:0.9px;height:294.39px;background:#bfbfbf;"></div>
<div style="left:657.9px;top:583.0px;width:0.9px;height:294.39px;background:#bfbfbf;"></div>
<div style="left:717.9px;top:583.0px;width:0.9px;height:294.39px;background:#bfbfbf;"></div>
<span style="right:1141.4px;top:539.7px;font-size:13.8px;line-height:20px;color:#111;font-weight:400;letter-spacing:-.2px"><span style="color:#3b4fc4">[기준 주차]</span>의 인기 키워드 TOP 300</span>
<div style="left:750px;top:583.0px;width:622.4000000000001px;height:21.03px;background:#cbcbcb;"></div>
<div style="left:750px;top:583.0px;width:622.4000000000001px;height:0.9px;background:#bfbfbf;"></div>
<span style="right:659.8px;top:587.9px;font-size:10.0px;line-height:14px;color:#111;font-weight:700;letter-spacing:-.1px">랭킹</span>
<span style="left:794.4px;top:587.9px;font-size:10.0px;line-height:14px;color:#111;font-weight:700;letter-spacing:-.1px">키워드</span>
<span style="left:950.5px;top:587.9px;font-size:10.0px;line-height:14px;color:#111;font-weight:700;letter-spacing:-.1px">1차 카테고리</span>
<span style="left:1021.9px;top:587.9px;font-size:10.0px;line-height:14px;color:#111;font-weight:700;letter-spacing:-.1px">2차 카테고리</span>
<span style="left:1096.2px;top:587.9px;font-size:10.0px;line-height:14px;color:#111;font-weight:700;letter-spacing:-.1px">3차 카테고리</span>
<span style="right:201.4px;top:587.9px;font-size:10.0px;line-height:14px;color:#111;font-weight:700;letter-spacing:-.1px">검색량</span>
<span style="right:135.2px;top:587.9px;font-size:10.0px;line-height:14px;color:#111;font-weight:700;letter-spacing:-.1px">전주 검색량</span>
<span style="right:74.6px;top:587.9px;font-size:10.0px;line-height:14px;color:#111;font-weight:700;letter-spacing:-.1px">증감률</span>
<div style="left:750px;top:604.0px;width:622.4000000000001px;height:21.03px;background:#c6c6c6;"></div>
<div style="left:1311.8px;top:604.0px;width:60.600000000000136px;height:21.03px;background:#5762c6;"></div>
<div style="left:750px;top:604.0px;width:622.4000000000001px;height:0.9px;background:#bfbfbf;"></div>
<span style="right:659.8px;top:608.6px;font-size:10.0px;line-height:14px;color:#171717;font-weight:400;letter-spacing:.25px">1</span>
<span style="left:794.4px;top:608.6px;font-size:10.0px;line-height:14px;color:#171717;font-weight:400;letter-spacing:0">뷰티페스타</span>
<span style="left:950.5px;top:608.6px;font-size:10.0px;line-height:14px;color:#171717;font-weight:400;letter-spacing:0">뷰티</span>
<span style="left:1021.9px;top:608.6px;font-size:10.0px;line-height:14px;color:#171717;font-weight:400;letter-spacing:0">공통</span>
<span style="left:1096.2px;top:608.6px;font-size:10.0px;line-height:14px;color:#171717;font-weight:400;letter-spacing:0">공통</span>
<span style="right:201.4px;top:608.6px;font-size:10.0px;line-height:14px;color:#171717;font-weight:400;letter-spacing:.25px">807</span>
<span style="right:135.2px;top:608.6px;font-size:10.0px;line-height:14px;color:#171717;font-weight:400;letter-spacing:.25px">1</span>
<span style="right:74.6px;top:608.6px;font-size:10.0px;line-height:14px;color:#eef0ff;font-weight:400;letter-spacing:.25px">80,600%</span>
<div style="left:750px;top:625.03px;width:622.4000000000001px;height:21.03px;background:#cdcdcd;"></div>
<div style="left:1311.8px;top:625.03px;width:60.600000000000136px;height:21.03px;background:#b5b8d5;"></div>
<div style="left:750px;top:625.03px;width:622.4000000000001px;height:0.9px;background:#bfbfbf;"></div>
<span style="right:659.8px;top:629.6px;font-size:10.0px;line-height:14px;color:#171717;font-weight:400;letter-spacing:.25px">2</span>
<span style="left:794.4px;top:629.6px;font-size:10.0px;line-height:14px;color:#171717;font-weight:400;letter-spacing:0">슬림핏청자켓</span>
<span style="left:950.5px;top:629.6px;font-size:10.0px;line-height:14px;color:#171717;font-weight:400;letter-spacing:0">패션의류</span>
<span style="left:1021.9px;top:629.6px;font-size:10.0px;line-height:14px;color:#171717;font-weight:400;letter-spacing:0">여성 패션의류</span>
<span style="left:1096.2px;top:629.6px;font-size:10.0px;line-height:14px;color:#171717;font-weight:400;letter-spacing:0">재킷</span>
<span style="right:201.4px;top:629.6px;font-size:10.0px;line-height:14px;color:#171717;font-weight:400;letter-spacing:.25px">755</span>
<span style="right:135.2px;top:629.6px;font-size:10.0px;line-height:14px;color:#171717;font-weight:400;letter-spacing:.25px">4</span>
<span style="right:74.6px;top:629.6px;font-size:10.0px;line-height:14px;color:#171717;font-weight:400;letter-spacing:.25px">18,775%</span>
<div style="left:750px;top:646.06px;width:622.4000000000001px;height:21.03px;background:#c6c6c6;"></div>
<div style="left:1311.8px;top:646.06px;width:60.600000000000136px;height:21.03px;background:#b7bad5;"></div>
<div style="left:750px;top:646.06px;width:622.4000000000001px;height:0.9px;background:#bfbfbf;"></div>
<span style="right:659.8px;top:650.7px;font-size:10.0px;line-height:14px;color:#171717;font-weight:400;letter-spacing:.25px">3</span>
<span style="left:794.4px;top:650.7px;font-size:10.0px;line-height:14px;color:#171717;font-weight:400;letter-spacing:0">소상공인</span>
<span style="left:950.5px;top:650.7px;font-size:10.0px;line-height:14px;color:#171717;font-weight:400;letter-spacing:0">패션의류</span>
<span style="left:1021.9px;top:650.7px;font-size:10.0px;line-height:14px;color:#171717;font-weight:400;letter-spacing:0">여성 패션의류</span>
<span style="left:1096.2px;top:650.7px;font-size:10.0px;line-height:14px;color:#171717;font-weight:400;letter-spacing:0">공통</span>
<span style="right:201.4px;top:650.7px;font-size:10.0px;line-height:14px;color:#171717;font-weight:400;letter-spacing:.25px">2,136</span>
<span style="right:135.2px;top:650.7px;font-size:10.0px;line-height:14px;color:#171717;font-weight:400;letter-spacing:.25px">12</span>
<span style="right:74.6px;top:650.7px;font-size:10.0px;line-height:14px;color:#171717;font-weight:400;letter-spacing:.25px">17,700%</span>
<div style="left:750px;top:667.09px;width:622.4000000000001px;height:21.03px;background:#cdcdcd;"></div>
<div style="left:1311.8px;top:667.09px;width:60.600000000000136px;height:21.03px;background:#bfc1d4;"></div>
<div style="left:750px;top:667.09px;width:622.4000000000001px;height:0.9px;background:#bfbfbf;"></div>
<span style="right:659.8px;top:671.7px;font-size:10.0px;line-height:14px;color:#171717;font-weight:400;letter-spacing:.25px">4</span>
<span style="left:794.4px;top:671.7px;font-size:10.0px;line-height:14px;color:#171717;font-weight:400;letter-spacing:0">루리디아</span>
<span style="left:950.5px;top:671.7px;font-size:10.0px;line-height:14px;color:#171717;font-weight:400;letter-spacing:0">뷰티</span>
<span style="left:1021.9px;top:671.7px;font-size:10.0px;line-height:14px;color:#171717;font-weight:400;letter-spacing:0">아이메이크업</span>
<span style="left:1096.2px;top:671.7px;font-size:10.0px;line-height:14px;color:#171717;font-weight:400;letter-spacing:0">아이섀도우</span>
<span style="right:201.4px;top:671.7px;font-size:10.0px;line-height:14px;color:#171717;font-weight:400;letter-spacing:.25px">13,281</span>
<span style="right:135.2px;top:671.7px;font-size:10.0px;line-height:14px;color:#171717;font-weight:400;letter-spacing:.25px">124</span>
<span style="right:74.6px;top:671.7px;font-size:10.0px;line-height:14px;color:#171717;font-weight:400;letter-spacing:.25px">10,610%</span>
<div style="left:750px;top:688.12px;width:622.4000000000001px;height:21.03px;background:#c6c6c6;"></div>
<div style="left:1311.8px;top:688.12px;width:60.600000000000136px;height:21.03px;background:#c1c3d3;"></div>
<div style="left:750px;top:688.12px;width:622.4000000000001px;height:0.9px;background:#bfbfbf;"></div>
<span style="right:659.8px;top:692.7px;font-size:10.0px;line-height:14px;color:#171717;font-weight:400;letter-spacing:.25px">5</span>
<span style="left:794.4px;top:692.7px;font-size:10.0px;line-height:14px;color:#171717;font-weight:400;letter-spacing:0">포드집업</span>
<span style="left:950.5px;top:692.7px;font-size:10.0px;line-height:14px;color:#171717;font-weight:400;letter-spacing:0">패션의류</span>
<span style="left:1021.9px;top:692.7px;font-size:10.0px;line-height:14px;color:#171717;font-weight:400;letter-spacing:0">여성 패션의류</span>
<span style="left:1096.2px;top:692.7px;font-size:10.0px;line-height:14px;color:#171717;font-weight:400;letter-spacing:0">니트/스웨터</span>
<span style="right:201.4px;top:692.7px;font-size:10.0px;line-height:14px;color:#171717;font-weight:400;letter-spacing:.25px">683</span>
<span style="right:135.2px;top:692.7px;font-size:10.0px;line-height:14px;color:#171717;font-weight:400;letter-spacing:.25px">7</span>
<span style="right:74.6px;top:692.7px;font-size:10.0px;line-height:14px;color:#171717;font-weight:400;letter-spacing:.25px">9,657%</span>
<div style="left:750px;top:709.15px;width:622.4000000000001px;height:21.03px;background:#cdcdcd;"></div>
<div style="left:1311.8px;top:709.15px;width:60.600000000000136px;height:21.03px;background:#c2c4d3;"></div>
<div style="left:750px;top:709.15px;width:622.4000000000001px;height:0.9px;background:#bfbfbf;"></div>
<span style="right:659.8px;top:713.8px;font-size:10.0px;line-height:14px;color:#171717;font-weight:400;letter-spacing:.25px">6</span>
<span style="left:794.4px;top:713.8px;font-size:10.0px;line-height:14px;color:#171717;font-weight:400;letter-spacing:0">컬러위드클로젯</span>
<span style="left:950.5px;top:713.8px;font-size:10.0px;line-height:14px;color:#171717;font-weight:400;letter-spacing:0">패션의류</span>
<span style="left:1021.9px;top:713.8px;font-size:10.0px;line-height:14px;color:#171717;font-weight:400;letter-spacing:0">여성 패션의류</span>
<span style="left:1096.2px;top:713.8px;font-size:10.0px;line-height:14px;color:#171717;font-weight:400;letter-spacing:0">공통</span>
<span style="right:201.4px;top:713.8px;font-size:10.0px;line-height:14px;color:#171717;font-weight:400;letter-spacing:.25px">7,495</span>
<span style="right:135.2px;top:713.8px;font-size:10.0px;line-height:14px;color:#171717;font-weight:400;letter-spacing:.25px">84</span>
<span style="right:74.6px;top:713.8px;font-size:10.0px;line-height:14px;color:#171717;font-weight:400;letter-spacing:.25px">8,823%</span>
<div style="left:750px;top:730.1800000000001px;width:622.4000000000001px;height:21.03px;background:#c6c6c6;"></div>
<div style="left:1311.8px;top:730.1800000000001px;width:60.600000000000136px;height:21.03px;background:#c3c4d2;"></div>
<div style="left:750px;top:730.1800000000001px;width:622.4000000000001px;height:0.9px;background:#bfbfbf;"></div>
<span style="right:659.8px;top:734.8px;font-size:10.0px;line-height:14px;color:#171717;font-weight:400;letter-spacing:.25px">7</span>
<span style="left:794.4px;top:734.8px;font-size:10.0px;line-height:14px;color:#171717;font-weight:400;letter-spacing:0">태오앤더</span>
<span style="left:950.5px;top:734.8px;font-size:10.0px;line-height:14px;color:#171717;font-weight:400;letter-spacing:0">뷰티</span>
<span style="left:1021.9px;top:734.8px;font-size:10.0px;line-height:14px;color:#171717;font-weight:400;letter-spacing:0">립메이크업</span>
<span style="left:1096.2px;top:734.8px;font-size:10.0px;line-height:14px;color:#171717;font-weight:400;letter-spacing:0">립틴트</span>
<span style="right:201.4px;top:734.8px;font-size:10.0px;line-height:14px;color:#171717;font-weight:400;letter-spacing:.25px">1,209</span>
<span style="right:135.2px;top:734.8px;font-size:10.0px;line-height:14px;color:#171717;font-weight:400;letter-spacing:.25px">14</span>
<span style="right:74.6px;top:734.8px;font-size:10.0px;line-height:14px;color:#171717;font-weight:400;letter-spacing:.25px">8,536%</span>
<div style="left:750px;top:751.21px;width:622.4000000000001px;height:21.03px;background:#cdcdcd;"></div>
<div style="left:1311.8px;top:751.21px;width:60.600000000000136px;height:21.03px;background:#c5c6d1;"></div>
<div style="left:750px;top:751.21px;width:622.4000000000001px;height:0.9px;background:#bfbfbf;"></div>
<span style="right:659.8px;top:755.8px;font-size:10.0px;line-height:14px;color:#171717;font-weight:400;letter-spacing:.25px">8</span>
<span style="left:794.4px;top:755.8px;font-size:10.0px;line-height:14px;color:#171717;font-weight:400;letter-spacing:0">도프엔핏</span>
<span style="left:950.5px;top:755.8px;font-size:10.0px;line-height:14px;color:#171717;font-weight:400;letter-spacing:0">패션의류</span>
<span style="left:1021.9px;top:755.8px;font-size:10.0px;line-height:14px;color:#171717;font-weight:400;letter-spacing:0">여성 패션의류</span>
<span style="left:1096.2px;top:755.8px;font-size:10.0px;line-height:14px;color:#171717;font-weight:400;letter-spacing:0">가디건</span>
<span style="right:201.4px;top:755.8px;font-size:10.0px;line-height:14px;color:#171717;font-weight:400;letter-spacing:.25px">748</span>
<span style="right:135.2px;top:755.8px;font-size:10.0px;line-height:14px;color:#171717;font-weight:400;letter-spacing:.25px">12</span>
<span style="right:74.6px;top:755.8px;font-size:10.0px;line-height:14px;color:#171717;font-weight:400;letter-spacing:.25px">6,133%</span>
<div style="left:750px;top:772.24px;width:622.4000000000001px;height:21.03px;background:#c6c6c6;"></div>
<div style="left:1311.8px;top:772.24px;width:60.600000000000136px;height:21.03px;background:#c6c7d0;"></div>
<div style="left:750px;top:772.24px;width:622.4000000000001px;height:0.9px;background:#bfbfbf;"></div>
<span style="right:659.8px;top:776.9px;font-size:10.0px;line-height:14px;color:#171717;font-weight:400;letter-spacing:.25px">9</span>
<span style="left:794.4px;top:776.9px;font-size:10.0px;line-height:14px;color:#171717;font-weight:400;letter-spacing:0">브리스킨</span>
<span style="left:950.5px;top:776.9px;font-size:10.0px;line-height:14px;color:#171717;font-weight:400;letter-spacing:0">뷰티</span>
<span style="left:1021.9px;top:776.9px;font-size:10.0px;line-height:14px;color:#171717;font-weight:400;letter-spacing:0">공통</span>
<span style="left:1096.2px;top:776.9px;font-size:10.0px;line-height:14px;color:#171717;font-weight:400;letter-spacing:0">공통</span>
<span style="right:201.4px;top:776.9px;font-size:10.0px;line-height:14px;color:#171717;font-weight:400;letter-spacing:.25px">726</span>
<span style="right:135.2px;top:776.9px;font-size:10.0px;line-height:14px;color:#171717;font-weight:400;letter-spacing:.25px">13</span>
<span style="right:74.6px;top:776.9px;font-size:10.0px;line-height:14px;color:#171717;font-weight:400;letter-spacing:.25px">5,485%</span>
<div style="left:750px;top:793.27px;width:622.4000000000001px;height:21.03px;background:#cdcdcd;"></div>
<div style="left:1311.8px;top:793.27px;width:60.600000000000136px;height:21.03px;background:#c6c7d0;"></div>
<div style="left:750px;top:793.27px;width:622.4000000000001px;height:0.9px;background:#bfbfbf;"></div>
<span style="right:659.8px;top:797.9px;font-size:10.0px;line-height:14px;color:#171717;font-weight:400;letter-spacing:.25px">10</span>
<span style="left:794.4px;top:797.9px;font-size:10.0px;line-height:14px;color:#171717;font-weight:400;letter-spacing:0">르위트</span>
<span style="left:950.5px;top:797.9px;font-size:10.0px;line-height:14px;color:#171717;font-weight:400;letter-spacing:0">패션의류</span>
<span style="left:1021.9px;top:797.9px;font-size:10.0px;line-height:14px;color:#171717;font-weight:400;letter-spacing:0">여성 패션의류</span>
<span style="left:1096.2px;top:797.9px;font-size:10.0px;line-height:14px;color:#171717;font-weight:400;letter-spacing:0">티셔츠</span>
<span style="right:201.4px;top:797.9px;font-size:10.0px;line-height:14px;color:#171717;font-weight:400;letter-spacing:.25px">653</span>
<span style="right:135.2px;top:797.9px;font-size:10.0px;line-height:14px;color:#171717;font-weight:400;letter-spacing:.25px">12</span>
<span style="right:74.6px;top:797.9px;font-size:10.0px;line-height:14px;color:#171717;font-weight:400;letter-spacing:.25px">5,342%</span>
<div style="left:750px;top:814.3px;width:622.4000000000001px;height:21.03px;background:#c6c6c6;"></div>
<div style="left:1311.8px;top:814.3px;width:60.600000000000136px;height:21.03px;background:#c7c8d0;"></div>
<div style="left:750px;top:814.3px;width:622.4000000000001px;height:0.9px;background:#bfbfbf;"></div>
<span style="right:659.8px;top:818.9px;font-size:10.0px;line-height:14px;color:#171717;font-weight:400;letter-spacing:.25px">11</span>
<span style="left:794.4px;top:818.9px;font-size:10.0px;line-height:14px;color:#171717;font-weight:400;letter-spacing:0">라룸젤리</span>
<span style="left:950.5px;top:818.9px;font-size:10.0px;line-height:14px;color:#171717;font-weight:400;letter-spacing:0">패션의류</span>
<span style="left:1021.9px;top:818.9px;font-size:10.0px;line-height:14px;color:#171717;font-weight:400;letter-spacing:0">여성 패션의류</span>
<span style="left:1096.2px;top:818.9px;font-size:10.0px;line-height:14px;color:#171717;font-weight:400;letter-spacing:0">티셔츠</span>
<span style="right:201.4px;top:818.9px;font-size:10.0px;line-height:14px;color:#171717;font-weight:400;letter-spacing:.25px">4,312</span>
<span style="right:135.2px;top:818.9px;font-size:10.0px;line-height:14px;color:#171717;font-weight:400;letter-spacing:.25px">81</span>
<span style="right:74.6px;top:818.9px;font-size:10.0px;line-height:14px;color:#171717;font-weight:400;letter-spacing:.25px">5,223%</span>
<div style="left:750px;top:835.33px;width:622.4000000000001px;height:21.03px;background:#cdcdcd;"></div>
<div style="left:1311.8px;top:835.33px;width:60.600000000000136px;height:21.03px;background:#c7c8d0;"></div>
<div style="left:750px;top:835.33px;width:622.4000000000001px;height:0.9px;background:#bfbfbf;"></div>
<span style="right:659.8px;top:839.9px;font-size:10.0px;line-height:14px;color:#171717;font-weight:400;letter-spacing:.25px">12</span>
<span style="left:794.4px;top:839.9px;font-size:10.0px;line-height:14px;color:#171717;font-weight:400;letter-spacing:0">허밍</span>
<span style="left:950.5px;top:839.9px;font-size:10.0px;line-height:14px;color:#171717;font-weight:400;letter-spacing:0">패션의류</span>
<span style="left:1021.9px;top:839.9px;font-size:10.0px;line-height:14px;color:#171717;font-weight:400;letter-spacing:0">여성 패션의류</span>
<span style="left:1096.2px;top:839.9px;font-size:10.0px;line-height:14px;color:#171717;font-weight:400;letter-spacing:0">공통</span>
<span style="right:201.4px;top:839.9px;font-size:10.0px;line-height:14px;color:#171717;font-weight:400;letter-spacing:.25px">1,034</span>
<span style="right:135.2px;top:839.9px;font-size:10.0px;line-height:14px;color:#171717;font-weight:400;letter-spacing:.25px">20</span>
<span style="right:74.6px;top:839.9px;font-size:10.0px;line-height:14px;color:#171717;font-weight:400;letter-spacing:.25px">5,070%</span>
<div style="left:750px;top:856.36px;width:622.4000000000001px;height:21.03px;background:#c6c6c6;"></div>
<div style="left:1311.8px;top:856.36px;width:60.600000000000136px;height:21.03px;background:#c8c8cf;"></div>
<div style="left:750px;top:856.36px;width:622.4000000000001px;height:0.9px;background:#bfbfbf;"></div>
<span style="right:659.8px;top:861.0px;font-size:10.0px;line-height:14px;color:#171717;font-weight:400;letter-spacing:.25px">13</span>
<span style="left:794.4px;top:861.0px;font-size:10.0px;line-height:14px;color:#171717;font-weight:400;letter-spacing:0">김장위크</span>
<span style="left:950.5px;top:861.0px;font-size:10.0px;line-height:14px;color:#171717;font-weight:400;letter-spacing:0">패션의류</span>
<span style="left:1021.9px;top:861.0px;font-size:10.0px;line-height:14px;color:#171717;font-weight:400;letter-spacing:0">여성 패션의류</span>
<span style="left:1096.2px;top:861.0px;font-size:10.0px;line-height:14px;color:#171717;font-weight:400;letter-spacing:0">공통</span>
<span style="right:201.4px;top:861.0px;font-size:10.0px;line-height:14px;color:#171717;font-weight:400;letter-spacing:.25px">1,210</span>
<span style="right:135.2px;top:861.0px;font-size:10.0px;line-height:14px;color:#171717;font-weight:400;letter-spacing:.25px">24</span>
<span style="right:74.6px;top:861.0px;font-size:10.0px;line-height:14px;color:#171717;font-weight:400;letter-spacing:.25px">4,942%</span>
<div style="left:749.6px;top:583.0px;width:0.9px;height:294.39px;background:#bfbfbf;"></div>
<div style="left:786.8000000000001px;top:583.0px;width:0.9px;height:294.39px;background:#bfbfbf;"></div>
<div style="left:942.9px;top:583.0px;width:0.9px;height:294.39px;background:#bfbfbf;"></div>
<div style="left:1014.3000000000001px;top:583.0px;width:0.9px;height:294.39px;background:#bfbfbf;"></div>
<div style="left:1088.6px;top:583.0px;width:0.9px;height:294.39px;background:#bfbfbf;"></div>
<div style="left:1175.6px;top:583.0px;width:0.9px;height:294.39px;background:#bfbfbf;"></div>
<div style="left:1245.1999999999998px;top:583.0px;width:0.9px;height:294.39px;background:#bfbfbf;"></div>
<div style="left:1311.3999999999999px;top:583.0px;width:0.9px;height:294.39px;background:#bfbfbf;"></div>
<div style="left:1372.0px;top:583.0px;width:0.9px;height:294.39px;background:#bfbfbf;"></div>
<svg style="left:754.8px;top:542.2px" width="11" height="13.6" viewBox="0 0 110 136"><rect x="0" y="0" width="104" height="136" rx="8" fill="#b1a6c6"/><path d="M0 45H104M0 90H104M35 0V136M70 0V136" stroke="#a397bb" stroke-width="4"/><path d="M2 78 26 60 44 84 100 22" fill="none" stroke="#2c86cf" stroke-width="15" stroke-linecap="round" stroke-linejoin="round"/></svg>
<span style="left:775.0px;top:540.0px;font-size:13.8px;line-height:20px;color:#141414;font-weight:400;letter-spacing:-.2px"><span style="color:#3f51c6">[기준 주차]</span>의 급상승 키워드 TOP 300</span>
<span style="left:756.0px;top:564.0px;font-size:10.15px;line-height:15px;color:#4f4f4f;font-weight:400;letter-spacing:0">주간 검색량 500건 이상 &amp; 전주 대비 증감률 30% 이상인 키워드 대상</span>
<div style="left:79.2px;top:400.2px;width:209.3px;height:207.8px;background:#cdcdcd;border-radius:0 0 3px 3px;box-shadow:0 1px 4px rgba(0,0,0,.28),0 0 0 .6px rgba(0,0,0,.12)"></div>
<div style="left:83.8px;top:404px;width:200px;height:13.5px;background:#cdcdcd;border:1px solid #9a9a9a;border-radius:2.5px"></div>
<span style="left:87.2px;top:406.2px;font-size:6.6px;line-height:10px;color:#646464;font-weight:400;">Search value</span>
<svg style="left:268.6px;top:406.8px" width="7.6" height="7.6" viewBox="0 0 76 76"><circle cx="31" cy="31" r="21" fill="none" stroke="#444" stroke-width="9"/><path d="M47 47 68 68" stroke="#444" stroke-width="10" stroke-linecap="round"/></svg>
<div style="left:84px;top:423.4px;width:8.2px;height:8.2px;background:#cdcdcd;border:0.8px solid #8a8a8a;border-radius:1.5px"></div>
<span style="left:95.8px;top:422.9px;font-size:6.7px;line-height:10px;color:#1c1c1c;font-weight:700;letter-spacing:-.1px">Select all</span>
<div style="left:79.2px;top:434.2px;width:204px;height:152px;overflow:hidden">
<div style="left:4.8px;top:-4.2px;width:8.2px;height:8.2px;border:.8px solid #8a8a8a;border-radius:1.5px"></div>
<span style="left:16.6px;top:-5.1px;font-size:6.75px;line-height:10px;color:#111;font-weight:500;letter-spacing:.2px">2024-02-26</span>
<div style="left:4.8px;top:10.9px;width:8.2px;height:8.2px;border:.8px solid #8a8a8a;border-radius:1.5px"></div>
<span style="left:16.6px;top:10.0px;font-size:6.75px;line-height:10px;color:#111;font-weight:500;letter-spacing:.2px">2024-03-04</span>
<div style="left:4.8px;top:26.0px;width:8.2px;height:8.2px;border:.8px solid #8a8a8a;border-radius:1.5px"></div>
<span style="left:16.6px;top:25.1px;font-size:6.75px;line-height:10px;color:#111;font-weight:500;letter-spacing:.2px">2024-03-11</span>
<div style="left:4.8px;top:41.0px;width:8.2px;height:8.2px;border:.8px solid #8a8a8a;border-radius:1.5px"></div>
<span style="left:16.6px;top:40.1px;font-size:6.75px;line-height:10px;color:#111;font-weight:500;letter-spacing:.2px">2024-03-18</span>
<div style="left:4.8px;top:56.1px;width:8.2px;height:8.2px;border:.8px solid #8a8a8a;border-radius:1.5px"></div>
<span style="left:16.6px;top:55.2px;font-size:6.75px;line-height:10px;color:#111;font-weight:500;letter-spacing:.2px">2024-03-25</span>
<div style="left:4.8px;top:71.1px;width:8.2px;height:8.2px;border:.8px solid #8a8a8a;border-radius:1.5px"></div>
<span style="left:16.6px;top:70.2px;font-size:6.75px;line-height:10px;color:#111;font-weight:500;letter-spacing:.2px">2024-04-01</span>
<div style="left:4.8px;top:86.2px;width:8.2px;height:8.2px;border:.8px solid #8a8a8a;border-radius:1.5px"></div>
<span style="left:16.6px;top:85.3px;font-size:6.75px;line-height:10px;color:#111;font-weight:500;letter-spacing:.2px">2024-04-08</span>
<div style="left:4.8px;top:101.3px;width:8.2px;height:8.2px;border:.8px solid #8a8a8a;border-radius:1.5px"></div>
<span style="left:16.6px;top:100.4px;font-size:6.75px;line-height:10px;color:#111;font-weight:500;letter-spacing:.2px">2024-04-15</span>
<div style="left:4.8px;top:116.3px;width:8.2px;height:8.2px;border:.8px solid #8a8a8a;border-radius:1.5px"></div>
<span style="left:16.6px;top:115.4px;font-size:6.75px;line-height:10px;color:#111;font-weight:500;letter-spacing:.2px">2024-04-22</span>
<div style="left:4.8px;top:131.4px;width:8.2px;height:8.2px;border:.8px solid #8a8a8a;border-radius:1.5px"></div>
<span style="left:16.6px;top:130.5px;font-size:6.75px;line-height:10px;color:#111;font-weight:500;letter-spacing:.2px">2024-04-29</span>
<div style="left:4.8px;top:146.4px;width:8.2px;height:8.2px;border:.8px solid #8a8a8a;border-radius:1.5px"></div>
<span style="left:16.6px;top:145.5px;font-size:6.75px;line-height:10px;color:#111;font-weight:500;letter-spacing:.2px">2024-05-06</span>
</div>
<svg style="left:283.4px;top:436.4px" width="4" height="3.2" viewBox="0 0 40 32"><path d="M20 2 38 30H2Z" fill="#666"/></svg>
<svg style="left:283.4px;top:580.4px" width="4" height="3.2" viewBox="0 0 40 32"><path d="M20 30 38 2H2Z" fill="#666"/></svg>
<div style="left:284.2px;top:493.6px;width:2.6px;height:8.6px;background:#8d8d8d;border-radius:1.3px"></div>
<div style="left:84.2px;top:591.3px;width:14.6px;height:8.4px;background:#cdcdcd;border:.8px solid #777;border-radius:4.2px"></div>
<div style="left:85.4px;top:592.5px;width:6px;height:6px;background:#666;border-radius:50%"></div>
<span style="left:100.6px;top:590.5px;font-size:6.6px;line-height:10px;color:#1c1c1c;font-weight:500;">Show selected</span>
<svg style="left:282.6px;top:602px" width="5" height="5" viewBox="0 0 50 50"><path d="M46 8 8 46M46 28 28 46" stroke="#777" stroke-width="5"/></svg>
<div style="left:45px;top:497px;width:9.2px;height:21.4px;background:#6e7272;border-radius:0 2.5px 2.5px 0"></div>
<svg style="left:46.6px;top:504.2px" width="5" height="7" viewBox="0 0 50 70"><path d="M38 6 12 35l26 29" fill="none" stroke="#e4e4e4" stroke-width="8" stroke-linecap="round" stroke-linejoin="round"/></svg>
<div style="left:1216.6px;top:833.5px;width:37px;height:21.6px;background:#d5d5d5;border-radius:11px;box-shadow:0 1px 5px rgba(0,0,0,.10)"></div>
<span style="left:1235.3px;top:838.6px;font-size:6.9px;line-height:10px;color:#222;font-weight:500;transform:translateX(-50%);letter-spacing:-.15px">피드백</span>
<div style="left:1259.7px;top:833.5px;width:72.4px;height:21.6px;background:#d5d5d5;border-radius:11px;box-shadow:0 1px 5px rgba(0,0,0,.10)"></div>
<span style="left:1266.4px;top:838.6px;font-size:7.1px;line-height:10px;color:#222;font-weight:500;letter-spacing:-.15px">상담사 문의</span>
<div style="left:1307.2px;top:841.2px;width:0.7px;height:6px;background:#b5b5b5;"></div>
<span style="left:1314.2px;top:838.6px;font-size:7.1px;line-height:10px;color:#222;font-weight:500;letter-spacing:-.15px">내역</span>
<div style="left:1339.6px;top:833.3px;width:60px;height:21.5px;background:#212221;border-radius:11px"></div>
<div style="left:1349px;top:839px;width:10px;height:10px;background:#e7c321;border-radius:50%;border:.8px solid #3c7fc4"></div>
<div style="left:1351.4px;top:841.4px;width:5.2px;height:5.2px;background:#d4a91a;border-radius:50%"></div>
<span style="left:1364.6px;top:839.7px;font-size:6.4px;line-height:9px;color:#f2f2f2;font-weight:700;letter-spacing:-.2px">파트너</span>
</div></div>
<div style="left:158.5px;top:225.7px;width:523.6px;height:56.6px;background:#ffffff;"></div>
<span style="left:173.7px;top:248.6px;font-size:15.6px;line-height:22px;color:#868b90;font-weight:500;letter-spacing:-.7px">지금 인기 키워드</span>
<span style="left:304.0px;top:248.6px;font-size:15.6px;line-height:22px;color:#868b90;font-weight:500;letter-spacing:-.7px">골라 보는 키워드</span>
<span style="left:565.6px;top:248.6px;font-size:15.6px;line-height:22px;color:#868b90;font-weight:500;letter-spacing:-.7px">마이샵 키워드</span>
<svg style="left:656.6px;top:251.6px" width="16.4" height="16.4" viewBox="0 0 164 164"><circle cx="82" cy="82" r="70" fill="none" stroke="#868b90" stroke-width="11"/></svg>
<span style="left:664.8px;top:253.0px;font-size:10.6px;line-height:14px;color:#868b90;font-weight:700;transform:translateX(-50%)">?</span>
<div style="left:412.8px;top:222.8px;width:151px;height:65.2px;background:#ffffff;border:4.2px solid #f5060f;border-radius:14px"></div>
<span style="left:427.6px;top:244.6px;font-size:18.6px;line-height:26px;color:#1c1c1c;font-weight:500;letter-spacing:-.75px;-webkit-text-stroke:.3px #1c1c1c">미리 보는 키워드</span>
<div style="left:321px;top:338.2px;width:434px;height:501.2px;background:#ffcc00;border-radius:39px"></div>
<div style="left:330px;top:347.5px;width:416.4px;height:482.7px;background:#ffffff;border-radius:30px;overflow:hidden">
<div style="left:0px;top:0.0px;width:420px;height:40px;background:#f5f5f5;"></div>
<span style="left:0.8px;top:18.1px;font-size:15px;line-height:20px;color:#1e1e1e;font-weight:400;letter-spacing:.3px">[기준 주차] 선택</span>
<svg style="left:106.39999999999998px;top:21.19999999999999px" width="13.8" height="13.8" viewBox="0 0 140 140"><circle cx="70" cy="70" r="56" fill="none" stroke="#222" stroke-width="13"/><path d="M70 62v40" stroke="#222" stroke-width="15"/><circle cx="70" cy="41" r="9.5" fill="#222"/></svg>
<div style="left:0px;top:38.8px;width:420px;height:28px;background:linear-gradient(#fff 0,#fff 62%,#ececec 100%);border:1.4px solid #6c6c6c;border-top:1.8px solid #747474;border-bottom-color:#bbb;border-radius:5px"></div>
<div style="left:1.2px;top:64.5px;width:420px;height:420px;background:#ffffff;box-shadow:0 -1px 2px rgba(0,0,0,.10)"></div>
<div style="left:0px;top:56.5px;width:1.4px;height:7px;background:#666;"></div>
<span style="left:9.0px;top:43.5px;font-size:13.4px;line-height:18px;color:#1e1e1e;font-weight:400;letter-spacing:.45px;-webkit-text-stroke:.2px #1e1e1e">2025-01-06</span>
<svg style="left:397.6px;top:48.89999999999998px" width="11" height="5.8" viewBox="0 0 110 58"><path d="M55 3 106 55H4Z" fill="#707070"/></svg>
<div style="left:9px;top:73.7px;width:403px;height:27px;background:#ffffff;border:1.5px solid #adadad;border-radius:5px"></div>
<span style="left:15.7px;top:78.7px;font-size:13.05px;line-height:18px;color:#727272;font-weight:400;-webkit-text-stroke:.2px #727272">Search value</span>
<svg style="left:382.6px;top:80.10000000000002px" width="15" height="15" viewBox="0 0 150 150"><circle cx="58" cy="58" r="40" fill="none" stroke="#666" stroke-width="12"/><path d="M90 90 134 134" stroke="#666" stroke-width="14" stroke-linecap="round"/></svg>
<div style="left:9.4px;top:111.7px;width:16.3px;height:16.3px;background:#ffffff;border:1.3px solid #9a9a9a;border-radius:3px"></div>
<span style="left:33.5px;top:111.6px;font-size:13.4px;line-height:18px;color:#2c2c2c;font-weight:700;letter-spacing:-.3px">Select all</span>
<div style="left:0;top:133.5px;width:412px;height:305px;overflow:hidden">
<div style="left:9.4px;top:-7.6px;width:16.2px;height:16.2px;border:1.3px solid #9a9a9a;border-radius:3px;background:#fff"></div>
<span style="left:33.3px;top:-8.5px;font-size:13.4px;line-height:18px;color:#262626;font-weight:400;letter-spacing:.45px;-webkit-text-stroke:.25px #262626">2024-02-26</span>
<div style="left:9.4px;top:22.7px;width:16.2px;height:16.2px;border:1.3px solid #9a9a9a;border-radius:3px;background:#fff"></div>
<span style="left:33.3px;top:21.8px;font-size:13.4px;line-height:18px;color:#262626;font-weight:400;letter-spacing:.45px;-webkit-text-stroke:.25px #262626">2024-03-04</span>
<div style="left:9.4px;top:53.0px;width:16.2px;height:16.2px;border:1.3px solid #9a9a9a;border-radius:3px;background:#fff"></div>
<span style="left:33.3px;top:52.1px;font-size:13.4px;line-height:18px;color:#262626;font-weight:400;letter-spacing:.45px;-webkit-text-stroke:.25px #262626">2024-03-11</span>
<div style="left:9.4px;top:83.3px;width:16.2px;height:16.2px;border:1.3px solid #9a9a9a;border-radius:3px;background:#fff"></div>
<span style="left:33.3px;top:82.4px;font-size:13.4px;line-height:18px;color:#262626;font-weight:400;letter-spacing:.45px;-webkit-text-stroke:.25px #262626">2024-03-18</span>
<div style="left:9.4px;top:113.5px;width:16.2px;height:16.2px;border:1.3px solid #9a9a9a;border-radius:3px;background:#fff"></div>
<span style="left:33.3px;top:112.6px;font-size:13.4px;line-height:18px;color:#262626;font-weight:400;letter-spacing:.45px;-webkit-text-stroke:.25px #262626">2024-03-25</span>
<div style="left:9.4px;top:143.8px;width:16.2px;height:16.2px;border:1.3px solid #9a9a9a;border-radius:3px;background:#fff"></div>
<span style="left:33.3px;top:142.9px;font-size:13.4px;line-height:18px;color:#262626;font-weight:400;letter-spacing:.45px;-webkit-text-stroke:.25px #262626">2024-04-01</span>
<div style="left:9.4px;top:174.1px;width:16.2px;height:16.2px;border:1.3px solid #9a9a9a;border-radius:3px;background:#fff"></div>
<span style="left:33.3px;top:173.2px;font-size:13.4px;line-height:18px;color:#262626;font-weight:400;letter-spacing:.45px;-webkit-text-stroke:.25px #262626">2024-04-08</span>
<div style="left:9.4px;top:204.4px;width:16.2px;height:16.2px;border:1.3px solid #9a9a9a;border-radius:3px;background:#fff"></div>
<span style="left:33.3px;top:203.5px;font-size:13.4px;line-height:18px;color:#262626;font-weight:400;letter-spacing:.45px;-webkit-text-stroke:.25px #262626">2024-04-15</span>
<div style="left:9.4px;top:234.7px;width:16.2px;height:16.2px;border:1.3px solid #9a9a9a;border-radius:3px;background:#fff"></div>
<span style="left:33.3px;top:233.8px;font-size:13.4px;line-height:18px;color:#262626;font-weight:400;letter-spacing:.45px;-webkit-text-stroke:.25px #262626">2024-04-22</span>
<div style="left:9.4px;top:264.9px;width:16.2px;height:16.2px;border:1.3px solid #9a9a9a;border-radius:3px;background:#fff"></div>
<span style="left:33.3px;top:264.0px;font-size:13.4px;line-height:18px;color:#262626;font-weight:400;letter-spacing:.45px;-webkit-text-stroke:.25px #262626">2024-04-29</span>
<div style="left:9.4px;top:295.2px;width:16.2px;height:16.2px;border:1.3px solid #9a9a9a;border-radius:3px;background:#fff"></div>
<span style="left:33.3px;top:294.3px;font-size:13.4px;line-height:18px;color:#262626;font-weight:400;letter-spacing:.45px;-webkit-text-stroke:.25px #262626">2024-05-06</span>
</div>
<svg style="left:410.79999999999995px;top:138.7px" width="8" height="6.4" viewBox="0 0 80 64"><path d="M40 4 76 60H4Z" fill="#8a8a8a"/></svg>
<svg style="left:410.79999999999995px;top:428.9px" width="8" height="6.4" viewBox="0 0 80 64"><path d="M40 60 76 4H4Z" fill="#8a8a8a"/></svg>
<div style="left:411.6px;top:254.3px;width:6px;height:17.4px;background:#8d8d8d;border-radius:3px"></div>
<div style="left:9px;top:452.5px;width:30.2px;height:17px;background:#ffffff;border:1.4px solid #8a8a8a;border-radius:8.5px"></div>
<div style="left:11.6px;top:455.1px;width:11.8px;height:11.8px;background:#757575;border-radius:50%"></div>
<span style="left:43.3px;top:450.7px;font-size:13.3px;line-height:18px;color:#262626;font-weight:400;letter-spacing:-.05px;-webkit-text-stroke:.25px #262626">Show selected</span>
</div>
</div></body></html>
